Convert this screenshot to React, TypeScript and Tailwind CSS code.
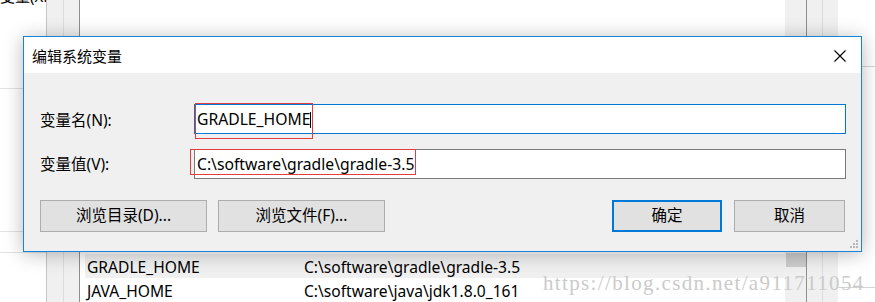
import React from "react";

const ui = { fontFamily: "'Noto Sans', 'Noto Sans CJK SC', sans-serif" };

const Button: React.FC<{ label: string; width: string; primary?: boolean }> = ({ label, width, primary }) => (
  <div
    className={`${width} h-[32px] flex items-center justify-center bg-[#e1e1e1] text-[15.5px] text-black ${
      primary ? "border-2 border-[#0078d7]" : "border border-[#adadad]"
    }`}
  >
    {label}
  </div>
);

const App: React.FC = () => {
  return (
    <div className="relative w-[875px] h-[302px] overflow-hidden bg-white" style={ui}>
      {/* Background window */}
      <div className="flex h-full">
        <div className="w-[46px] flex flex-col bg-white">
          <div className="h-[89px] border-b border-[#e3e3e3] overflow-hidden">
            <div className="-mt-[13px] text-[15px] leading-[18px] whitespace-nowrap">变量(XP)91</div>
          </div>
          <div className="h-[143px] border-b border-[#e3e3e3]" />
          <div className="h-[21px] border-b border-[#e3e3e3]" />
        </div>
        <div className="w-px bg-[#c4c4c4]" />
        <div className="w-[16px] bg-[#f0f0f0]" />
        <div className="w-px bg-[#dcdcdc]" />
        <div className="w-[15px] bg-[#f0f0f0]" />
        <div className="w-px bg-[#8e8e8e]" />

        {/* List */}
        <div className="w-[705px] flex flex-col pl-[5px] text-[15.6px] text-black">
          <div className="h-[255px]" />
          <div className="h-[24px] flex items-center bg-[#f0f0f0] pl-[2px] pt-[3px]">
            <span className="w-[217px]">GRADLE_HOME</span>
            <span>C:\software\gradle\gradle-3.5</span>
          </div>
          <div className="h-[24px] flex items-center pl-[2px] pt-[3px]">
            <span className="w-[217px]">JAVA_HOME</span>
            <span>C:\software\java\jdk1.8.0_161</span>
          </div>
        </div>

        {/* Scrollbar */}
        <div className="w-[21px] flex flex-col bg-[#f0f0f0] pl-px">
          <div className="h-[253px]" />
          <div className="h-[14px] bg-[#cdcdcd]" />
        </div>

        <div className="w-px bg-[#8e8e8e]" />
        <div className="w-[15px] bg-[#f0f0f0]" />
        <div className="w-px bg-[#dcdcdc]" />
        <div className="w-[15px] bg-[#f0f0f0]" />
        <div className="flex-1 flex flex-col bg-white">
          <div className="h-[67px] border-b border-[#d4d4d4]" />
          <div className="h-[221px] border-b border-[#d4d4d4]" />
        </div>
      </div>

      {/* Watermark */}
      <div
        className="absolute left-[543px] top-[268px] text-[21px] tracking-[1.35px] text-[#cbcbcb] whitespace-nowrap"
        style={{ fontFamily: "'Liberation Serif', serif" }}
      >
        https://blog.csdn.net/a911711054
      </div>

      {/* Dialog */}
      <div className="absolute left-[23px] top-[36px] w-[839px] h-[216px] border border-[#1883d7] flex flex-col shadow-[0_2px_18px_rgba(0,0,0,0.28)]">
        <div className="h-[36px] shrink-0 bg-white flex items-center justify-between pl-[8px] pr-[15px]">
          <span className="text-[15px] text-black mt-[3px]">编辑系统变量</span>
          <svg width="12" height="12" viewBox="0 0 12 12" className="mt-[2px]">
            <path d="M0.5 0.5 L11.5 11.5 M11.5 0.5 L0.5 11.5" stroke="#000" strokeWidth="1.1" />
          </svg>
        </div>

        <div className="relative flex-1 bg-[#f0f0f0] pl-[16px] pr-[15px] text-[15.5px] text-black">
          <div className="flex items-center mt-[31px]">
            <span className="w-[154px] pt-[3px]">变量名(N):</span>
            <div className="flex-1 h-[30px] border border-[#0078d7] bg-white flex items-center pl-[2px] pt-[2px] text-[15.7px]">
              <span>GRADLE_HOME</span>
              <span className="w-px h-[16px] bg-black" />
            </div>
          </div>
          <div className="flex items-center mt-[15px]">
            <span className="w-[154px] pt-[2px]">变量值(V):</span>
            <div className="flex-1 h-[30px] border border-[#7a7a7a] bg-white flex items-center pl-[2px] pt-[1px] text-[15.7px]">
              <span>C:\software\gradle\gradle-3.5</span>
            </div>
          </div>
          <div className="flex items-center mt-[21px] mr-px">
            <Button label="浏览目录(D)..." width="w-[167px]" />
            <div className="w-[11px]" />
            <Button label="浏览文件(F)..." width="w-[167px]" />
            <div className="flex-1" />
            <Button label="确定" width="w-[110px]" primary />
            <div className="w-[12px]" />
            <Button label="取消" width="w-[111px]" />
          </div>

          {/* Resize grip */}
          <svg width="10" height="10" viewBox="0 0 10 10" className="absolute right-[2px] bottom-[2px]">
            <rect x="7" y="1" width="2" height="2" fill="#b9b9b9" />
            <rect x="4" y="4" width="2" height="2" fill="#b9b9b9" />
            <rect x="7" y="4" width="2" height="2" fill="#b9b9b9" />
            <rect x="1" y="7" width="2" height="2" fill="#b9b9b9" />
            <rect x="4" y="7" width="2" height="2" fill="#b9b9b9" />
            <rect x="7" y="7" width="2" height="2" fill="#b9b9b9" />
          </svg>
        </div>

        {/* Red annotation boxes */}
        <div className="absolute left-[171px] top-[66px] w-[118px] h-[36px] border border-[#e43d40]" />
        <div className="absolute left-[166px] top-[112px] w-[226px] h-[26px] border border-[#e43d40]" />
      </div>
    </div>
  );
};

export default App;
